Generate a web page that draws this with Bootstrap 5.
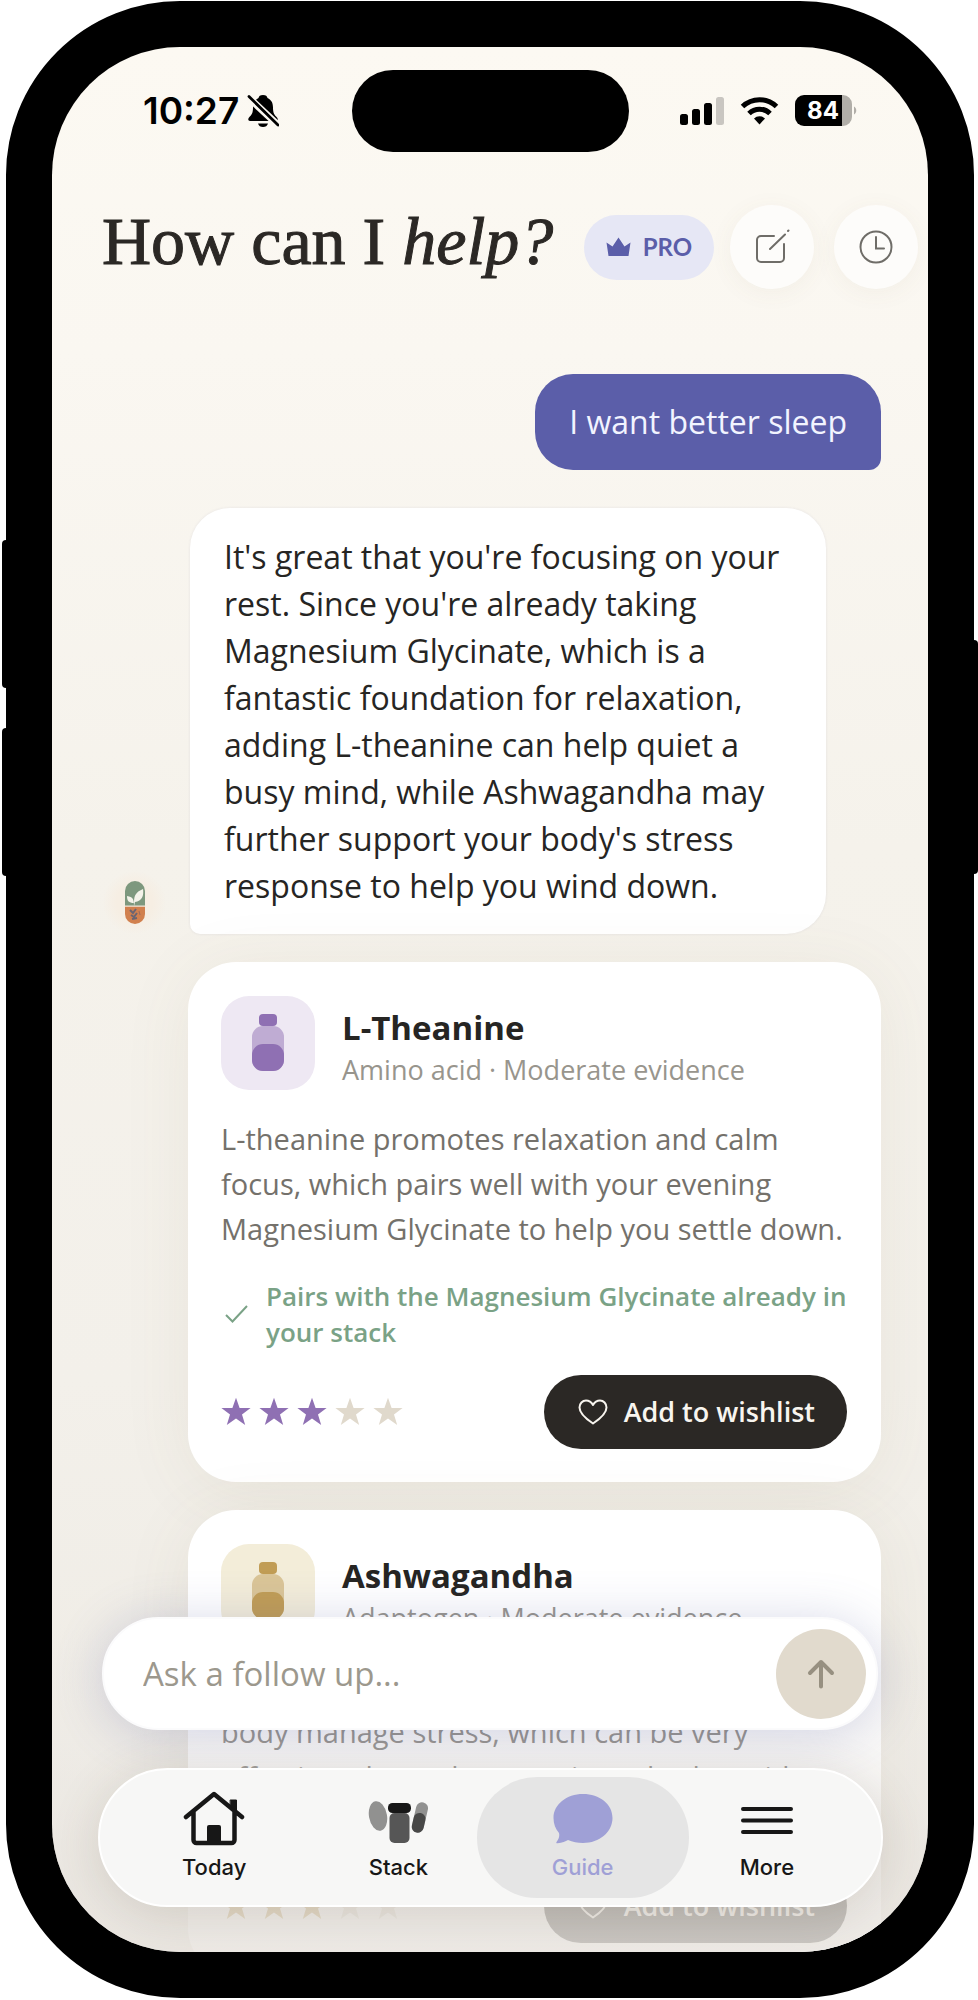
<!DOCTYPE html>
<html lang="en">
<head>
<meta charset="utf-8">
<meta name="viewport" content="width=device-width, initial-scale=1">
<title>How can I help?</title>
<link rel="stylesheet" href="https://cdn.jsdelivr.net/npm/bootstrap@5.3.0/dist/css/bootstrap.min.css">
<style>
  :root { --ink: #2b2825; --violet: #5b5ea9; }
  body { background: #fff; color: #262523; font-family: "Open Sans", "Liberation Sans", sans-serif; }

  /* device */
  .phone { height: calc(100vh - 3px); margin: 1px 4px 2px 6px; border: 46px solid #000; border-radius: 174px; background: #000; }
  .phone-key { width: 8px; background: #000; border-radius: 4px; }
  .key-up { left: -50px; top: 493px; height: 148px; }
  .key-down { left: -50px; top: 681px; height: 148px; }
  .key-side { right: -50px; top: 593px; height: 234px; }
  .screen { border-radius: 128px; background: linear-gradient(#fcf9f2 0, #faf7f1 16%, #f5f2eb 42%, #f3f0ea 70%, #edeae3 100%); }

  /* status bar */
  .status { padding: 23px 71px 0 91px; }
  .status-side { flex: 1 1 0; }
  .status-left { margin-right: 20px; }
  .island { width: 277px; height: 82px; border-radius: 41px; background: #000; margin-left: -40px; }
  .clock { font: 600 37px/40px Inter, "Liberation Sans", sans-serif; color: #000; }

  /* header */
  .top { padding: 0 10px 0 50px; margin-top: 53px; }
  .title { font: 500 68px/72px "Liberation Serif", serif; color: var(--ink); padding-bottom: 12px; -webkit-text-stroke: 1px var(--ink); }
  .pro { height: 65px; width: 130px; border-radius: 33px; background: #e6e7f5; color: var(--violet); font: 700 24px/32px Lato, sans-serif; border: 0; }
  .round-btn { width: 84px; height: 84px; background: #fdfcfa; border: 0; box-shadow: 0 4px 24px rgba(120, 105, 70, .06); }

  /* chat */
  .chat { padding: 0 47px 0 51px; margin-top: 85px; gap: 28px; }
  .say { font-size: 32px; line-height: 47px; }
  .say-me { background: var(--violet); color: #f2f4ff; padding: 24px 34px 25px; border-radius: 38px 38px 12px 38px; margin-bottom: 10px; }
  .say-guide { background: #fff; border-radius: 40px 40px 40px 10px; padding: 25px 34px; margin-right: 55px; box-shadow: 0 0 3px rgba(60, 60, 110, .09); }
  .avatar { width: 63px; height: 63px; background: radial-gradient(#f6eee3 40%, rgba(246, 238, 227, 0) 72%); }
  .supp { margin-left: 85px; border-radius: 48px; background: #fff; padding: 34px 34px 33px 33px; box-shadow: 0 8px 70px rgba(110, 100, 60, .08); }
  .tile { width: 94px; height: 94px; border-radius: 28px; }
  .supp-head { padding-top: 10px; margin-left: 27px; }
  .supp-name { font-size: 33px; line-height: 44px; font-weight: 700; }
  .supp-kind { font-size: 27px; line-height: 40px; color: #98958d; font-weight: 500; }
  .supp-text { font-size: 29px; line-height: 45px; color: #74716b; margin-top: 26px; }
  .supp-pair { font-size: 26px; line-height: 36px; color: #7aa286; font-weight: 600; margin-top: 27px; }
  .supp-foot { margin-top: 25px; }
  .wish { height: 74px; border: 0; border-radius: 37px; background: var(--ink); color: #f8f5ef; font-size: 27px; font-weight: 600; padding: 0 32px 0 34px; }

  /* bottom dock */
  .fade-out { height: 330px; background: linear-gradient(rgba(236, 233, 228, 0), rgba(236, 233, 230, .3) 35%, rgba(234, 230, 225, .76) 80%, rgba(234, 230, 225, .84)); }
  .dock { left: 46px; right: 45px; bottom: 45px; gap: 38px; }
  .ask { height: 113px; margin: 0 5px 0 4px; border-radius: 57px; padding: 0 10px 0 39px; background: #fff; border: 2px solid #fbfbfc; box-shadow: 0 4px 50px rgba(85, 90, 160, .24); }
  .ask input { border: 0; background: none; outline: 0; font-size: 33px; line-height: 47px; padding: 0; color: var(--ink); min-width: 0; }
  .ask input::placeholder { color: #9c988d; opacity: 1; }
  .send { width: 90px; height: 90px; background: #e1dacd; border: 0; }
  .tabs { height: 139px; border-radius: 70px; padding: 7px 22px; background: #f7f7f6; border: 2px solid #fff; box-shadow: 0 8px 50px rgba(80, 70, 50, .16); }
  .tab-item { font: 500 22px/28px Inter, "Liberation Sans", sans-serif; color: #171717; text-decoration: none; padding-top: 11px; gap: 5px; }
  .tab-item svg, .tab-item span { position: relative; }
  .tab-item.on { color: #9fa0d6; }
  .tab-item.on::before { content: ""; position: absolute; inset: 0 -14px; border-radius: 60px; background: #e5e5e5; }
</style>
</head>
<body>
<svg width="0" height="0" class="position-absolute" aria-hidden="true">
  <symbol id="star" viewBox="0 0 30 30"><path d="M15 .8 18.6 11H29.600L21 17.600 24.200 28 15 21.600 5.800 28 9 17.600.4 11H11.400Z"/></symbol>
  <symbol id="heart" viewBox="0 0 30 28"><path d="M15 25.500C9 21.500 1.500 15.500 1.500 9.500 1.500 5.500 4.500 2.500 8 2.500c3 0 5.500 1.800 7 4.500 1.500-2.700 4-4.500 7-4.500 3.500 0 6.500 3 6.500 7 0 6-7.500 12-13.500 16Z" fill="none" stroke="currentColor" stroke-width="2" stroke-linejoin="round"/></symbol>
  <symbol id="bottle" viewBox="0 0 94 94"><rect x="38" y="18" width="18" height="12" rx="4"/><rect x="31" y="30" width="32" height="45" rx="11" opacity=".5"/><rect x="31" y="48" width="32" height="27" rx="11"/></symbol>
</svg>

<div class="phone position-relative">
  <span class="phone-key key-up position-absolute"></span>
  <span class="phone-key key-down position-absolute"></span>
  <span class="phone-key key-side position-absolute"></span>

  <div class="screen position-relative overflow-hidden h-100">
    <div class="status d-flex align-items-center">
      <div class="status-side status-left d-flex align-items-center gap-2">
        <span class="clock">10:27</span>
        <svg width="32" height="34" viewBox="0 0 32 34" aria-label="Silent">
          <path d="M16 1c-3 0-4 1.200-4.500 3C7.500 6 6 9 6 13.500c0 6-1.500 7.500-4 10C.5 25.500 1.500 27 3 27h26c1.600 0 2.500-1.500 1-3.500-2.500-2.500-4-4-4-10C26 9 24.500 6 20.500 4 20 2.200 19 1 16 1ZM11 29.500h10c-.7 2.500-2.500 3.500-5 3.500s-4.300-1-5-3.500Z"/>
          <path d="m1 3 30 28" stroke="#fbf8f1" stroke-width="7"/><path d="m2 2.500 29 28.500" stroke="#000" stroke-width="2.800" stroke-linecap="round"/>
        </svg>
      </div>
      <div class="island"></div>
      <div class="status-side d-flex align-items-center justify-content-end">
        <svg width="44" height="28" viewBox="0 0 44 28" aria-label="Signal"><rect y="17" width="8" height="11" rx="2.500"/><rect x="12" y="12" width="8" height="16" rx="2.500"/><rect x="24" y="6" width="8" height="22" rx="2.500"/><rect x="36" width="8" height="28" rx="2.500" fill="#c9c6c1"/></svg>
        <svg class="mx-3" width="39" height="28" viewBox="0 0 39 28" aria-label="Wi-Fi"><g fill="none" stroke="#000" stroke-width="5"><path d="M2.500 9.500a24.500 24.500 0 0 1 34 0"/><path d="M9 16.500a15 15 0 0 1 21 0"/></g><path d="M19.500 27.500 14 21.500a8 8 0 0 1 11 0Z"/></svg>
        <svg width="62" height="32" viewBox="0 0 62 32" aria-label="Battery 84"><path d="M47 0h1a9 9 0 0 1 9 9v13a9 9 0 0 1-9 9h-1ZM59 11.500c3 1.500 3 6.500 0 8Z" fill="#b1aea8"/><path d="M9 0h38v31H9a9 9 0 0 1-9-9V9a9 9 0 0 1 9-9Z"/><text x="28" y="24" text-anchor="middle" font-family="Inter, sans-serif" font-weight="700" font-size="24" fill="#fff">84</text></svg>
      </div>
    </div>

    <header class="top d-flex align-items-center">
      <h1 class="title m-0 me-auto text-nowrap">How can I <em>help?</em></h1>
      <button type="button" class="pro d-flex align-items-center justify-content-center gap-2 flex-shrink-0 p-0">
        <svg width="25" height="20" viewBox="0 0 25 20" fill="currentColor" aria-hidden="true"><path d="m.5 5.500 6 4L12.500.5l6 9 6-4L22.500 19h-20Z"/></svg>
        <span class="ms-1">PRO</span>
      </button>
      <button type="button" class="round-btn rounded-circle flex-shrink-0 p-0 mx-3" aria-label="New chat">
        <svg width="36" height="36" viewBox="0 0 36 36" fill="none" stroke="#6f6d68" stroke-width="2" stroke-linecap="round" aria-hidden="true"><path d="M20 7H7a4 4 0 0 0-4 4v18a4 4 0 0 0 4 4h19a4 4 0 0 0 4-4V15M16 20 31 5.500M34 2l.5-.5"/></svg>
      </button>
      <button type="button" class="round-btn rounded-circle flex-shrink-0 p-0 ms-1" aria-label="History">
        <svg width="34" height="34" viewBox="0 0 34 34" fill="none" stroke="#6f6d68" stroke-width="2" stroke-linecap="round" aria-hidden="true"><circle cx="17" cy="17" r="15.500"/><path d="M17 7v11.500h8"/></svg>
      </button>
    </header>

    <main class="chat d-flex flex-column">
      <div class="say say-me align-self-end">I want better sleep</div>

      <div class="d-flex align-items-end">
        <div class="avatar rounded-circle flex-shrink-0 d-flex align-items-center justify-content-center">
          <svg width="20" height="43" viewBox="0 0 20 43" aria-label="Guide">
            <path d="M0 25V10a10 10 0 0 1 20 0v15Z" fill="#7d987e"/><path d="M0 25.500h20V33a10 10 0 0 1-20 0Z" fill="#d1804e"/><path d="M0 25h20" stroke="#efe6d6"/>
            <path d="M9 25c0-7-1-9-7-10 0 5 2 7 7 7 0-8 2-11 9-14 1 7-1 12-8 13" fill="#f4f3ea"/><path d="m5 29 3 3 3-4M6 34l3 2 3-4M7 38l5-1" fill="none" stroke="#6a6472" stroke-width="2"/><path d="m14 30 1 4" stroke="#9a6a5e"/>
          </svg>
        </div>
        <div class="say say-guide ms-4">It's great that you're focusing on your rest. Since you're already taking Magnesium Glycinate, which is a fantastic foundation for relaxation, adding L-theanine can help quiet a busy mind, while Ashwagandha may further support your body's stress response to help you wind down.</div>
      </div>

      <article class="supp">
        <div class="d-flex align-items-center">
          <svg class="tile flex-shrink-0" fill="#8f70b3" style="background:#eee8f3" aria-hidden="true"><use href="#bottle"/></svg>
          <div class="supp-head">
            <h2 class="supp-name m-0">L-Theanine</h2>
            <div class="supp-kind">Amino acid · Moderate evidence</div>
          </div>
        </div>
        <p class="supp-text mb-0">L-theanine promotes relaxation and calm focus, which pairs well with your evening Magnesium Glycinate to help you settle down.</p>
        <div class="supp-pair d-flex align-items-center">
          <svg class="flex-shrink-0 me-3" width="29" height="24" viewBox="0 0 29 24" fill="none" stroke="currentColor" stroke-width="2" aria-hidden="true"><path d="m5 13 6.500 6.500L26 4"/></svg>
          <div>Pairs with the Magnesium Glycinate already in your stack</div>
        </div>
        <div class="supp-foot d-flex align-items-center justify-content-between">
          <div class="d-flex gap-2" role="img" aria-label="3 of 5 stars">
            <svg width="30" height="30" fill="#8f70b3"><use href="#star"/></svg>
            <svg width="30" height="30" fill="#8f70b3"><use href="#star"/></svg>
            <svg width="30" height="30" fill="#8f70b3"><use href="#star"/></svg>
            <svg width="30" height="30" fill="#e0d9cc"><use href="#star"/></svg>
            <svg width="30" height="30" fill="#e0d9cc"><use href="#star"/></svg>
          </div>
          <button type="button" class="wish d-flex align-items-center gap-3 text-nowrap"><svg width="30" height="28" aria-hidden="true"><use href="#heart"/></svg>Add to wishlist</button>
        </div>
      </article>

      <article class="supp">
        <div class="d-flex align-items-center">
          <svg class="tile flex-shrink-0" fill="#c19d55" style="background:#f3edd9" aria-hidden="true"><use href="#bottle"/></svg>
          <div class="supp-head">
            <h2 class="supp-name m-0">Ashwagandha</h2>
            <div class="supp-kind">Adaptogen · Moderate evidence</div>
          </div>
        </div>
        <p class="supp-text mb-0">Ashwagandha is a root extract that helps the body manage stress, which can be very effective when taken consistently alongside magnesium.</p>
        <div class="supp-foot d-flex align-items-center justify-content-between">
          <div class="d-flex gap-2" role="img" aria-label="3 of 5 stars">
            <svg width="30" height="30" fill="#c19d55"><use href="#star"/></svg>
            <svg width="30" height="30" fill="#c19d55"><use href="#star"/></svg>
            <svg width="30" height="30" fill="#c19d55"><use href="#star"/></svg>
            <svg width="30" height="30" fill="#e0d9cc"><use href="#star"/></svg>
            <svg width="30" height="30" fill="#e0d9cc"><use href="#star"/></svg>
          </div>
          <button type="button" class="wish d-flex align-items-center gap-3 text-nowrap"><svg width="30" height="28" aria-hidden="true"><use href="#heart"/></svg>Add to wishlist</button>
        </div>
      </article>
    </main>

    <div class="fade-out position-absolute bottom-0 start-0 end-0"></div>
    <div class="dock position-absolute d-flex flex-column">
      <form class="ask d-flex align-items-center">
        <input type="text" class="flex-grow-1" placeholder="Ask a follow up..." aria-label="Ask a follow up">
        <button type="button" class="send rounded-circle flex-shrink-0 p-0" aria-label="Send">
          <svg width="30" height="32" viewBox="0 0 30 32" fill="none" stroke="#979081" stroke-width="4" stroke-linecap="round" stroke-linejoin="round" aria-hidden="true"><path d="M15 28.500V4M4 15 15 4l11 11"/></svg>
        </button>
      </form>
      <nav class="tabs d-flex">
        <a href="#" class="tab-item position-relative d-flex flex-column align-items-center flex-fill w-25">
          <svg width="62" height="60" viewBox="0 0 62 60" fill="none" stroke="#171717" stroke-width="4.500" stroke-linecap="round" stroke-linejoin="round" aria-hidden="true"><path d="M3 29 31 6l28 23M10.500 24v28a3 3 0 0 0 3 3h35a3 3 0 0 0 3-3V24"/><path d="M47.500 12h6v11l-6-5Z" fill="#171717" stroke-width="1"/><path d="M24 55V39a2 2 0 0 1 2-2h10a2 2 0 0 1 2 2v16Z" fill="#171717" stroke="none"/></svg>
          <span>Today</span>
        </a>
        <a href="#" class="tab-item position-relative d-flex flex-column align-items-center flex-fill w-25">
          <svg width="62" height="60" viewBox="0 0 62 60" fill="#171717" aria-hidden="true"><ellipse cx="11" cy="28" rx="9" ry="15" opacity=".46" transform="rotate(-10 11 28)"/><rect x="21" y="15" width="23" height="10" rx="4.500"/><rect x="22.500" y="25" width="20" height="30" rx="5" opacity=".72"/><g transform="rotate(13 53 29)"><rect x="47" y="14" width="12" height="31" rx="6" opacity=".46"/><path d="M47 31a6 6 0 0 1 12 0v8a6 6 0 0 1-12 0Z" opacity=".6"/></g></svg>
          <span>Stack</span>
        </a>
        <a href="#" class="tab-item on position-relative d-flex flex-column align-items-center flex-fill w-25" aria-current="page">
          <svg width="62" height="60" viewBox="0 0 62 60" fill="currentColor" aria-hidden="true"><path d="M31 6C14.500 6 1.500 16.500 1.500 30c0 6 2 11 5.500 15 1 4-1 7-2.500 9-.5 1 0 1.300 1 1.200 5-.2 8-1.700 10.500-3.200 4.500 2 9.500 3 15 3 16.500 0 29.500-11 29.500-25S47.500 6 31 6Z"/></svg>
          <span>Guide</span>
        </a>
        <a href="#" class="tab-item position-relative d-flex flex-column align-items-center flex-fill w-25">
          <svg width="62" height="60" viewBox="0 0 62 60" stroke="#171717" stroke-width="4" stroke-linecap="round" aria-hidden="true"><path d="M7 21h48M7 32.500h48M7 44h48"/></svg>
          <span>More</span>
        </a>
      </nav>
    </div>
  </div>
</div>
<script src="https://cdn.jsdelivr.net/npm/bootstrap@5.3.0/dist/js/bootstrap.bundle.min.js"></script>
</body>
</html>
